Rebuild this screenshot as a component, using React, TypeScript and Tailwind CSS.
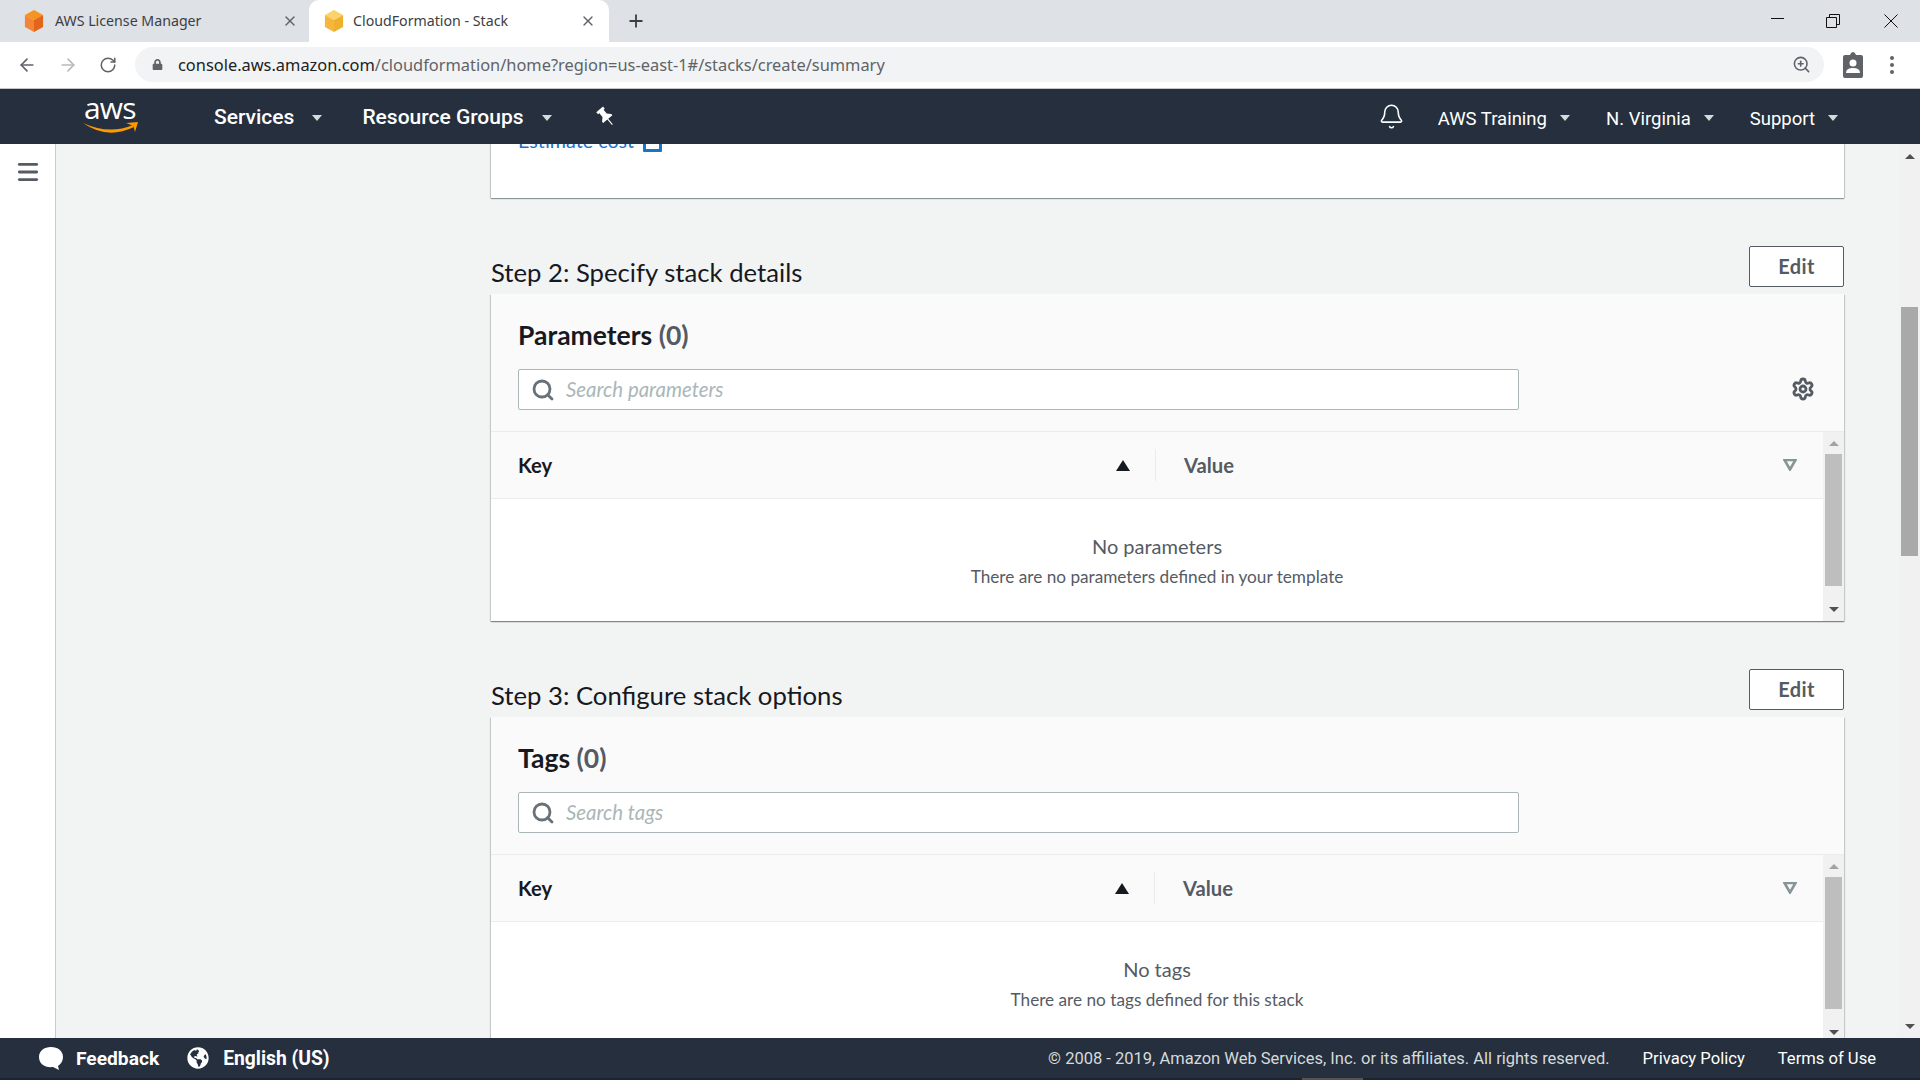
import { ArrowLeft, ArrowRight, Bell, Menu, Plus, RotateCw, Search, Settings, X, ZoomIn } from "lucide-react";
import { FaGlobeAmericas, FaLock } from "react-icons/fa";

const emberFont = "font-['Lato','Noto_Sans',sans-serif]";

function Cube({ light, dark, mid }: { light: string; dark: string; mid: string }) {
  return (
    <svg width="20" height="22" viewBox="0 0 22 24">
      <path d="M11 0 L21 5.5 L11 11 L1 5.5 Z" fill={light} />
      <path d="M1 5.5 L11 11 V24 L1 18.5 Z" fill={mid} />
      <path d="M21 5.5 L11 11 V24 L21 18.5 Z" fill={dark} />
    </svg>
  );
}

function Caret({ color = "border-t-[#d5dbdb]" }: { color?: string }) {
  return <span className={`inline-block h-0 w-0 border-x-[5px] border-t-[6px] border-x-transparent ${color}`} />;
}

function BrowserChrome() {
  return (
    <div className="shrink-0">
      {/* Tabs */}
      <div className="flex h-[42px] items-end bg-[#dee1e6] font-['Noto_Sans',sans-serif] text-[14.2px] text-[#3c4043]">
        <div className="flex h-[42px] w-[309px] items-center pl-[24px]">
          <Cube light="#f7941e" mid="#f58536" dark="#e3651b" />
          <span className="-mt-[1px] ml-[11px] flex-1">AWS License Manager</span>
          <X size={16} strokeWidth={2} className="mr-[11px] text-[#5f6368]" />
        </div>
        <div className="flex h-[42px] w-[300px] items-center rounded-t-[10px] bg-white pl-[15px]">
          <Cube light="#fbd36a" mid="#f4b63d" dark="#edb02f" />
          <span className="-mt-[1px] ml-[9px] flex-1">CloudFormation - Stack</span>
          <X size={16} strokeWidth={2} className="mr-[13px] text-[#5f6368]" />
        </div>
        <div className="flex h-[42px] items-center pl-[17px]">
          <Plus size={20} strokeWidth={2.2} className="text-[#3c4043]" />
        </div>
        <div className="ml-auto flex h-[42px] items-center">
          <svg width="14" height="14" viewBox="0 0 14 14" className="mr-[42px]" fill="none" stroke="#111">
            <path d="M1 4.5 H14" />
          </svg>
          <svg width="14" height="14" viewBox="0 0 14 14" className="mr-[44px]" fill="none" stroke="#111">
            <path d="M0.5 3.5 H10.5 V13.5 H0.5 Z M3.5 3.5 V0.5 H13.5 V10.5 H10.5" />
          </svg>
          <svg width="14" height="14" viewBox="0 0 14 14" className="mr-[22px]" fill="none" stroke="#111">
            <path d="M0.5 0.5 L13.5 13.5 M13.5 0.5 L0.5 13.5" />
          </svg>
        </div>
      </div>
      {/* Address bar */}
      <div className="flex h-[47px] items-center border-b border-[#c4c6c8] bg-white pb-[1px]">
        <ArrowLeft size={20} strokeWidth={2} className="ml-[17px] text-[#5f6368]" />
        <ArrowRight size={20} strokeWidth={2} className="ml-[21px] text-[#b6b9bd]" />
        <RotateCw size={18} strokeWidth={2} className="ml-[21px] text-[#5f6368]" />
        <div className="ml-[18px] flex h-[35px] w-[1689px] items-center rounded-full bg-[#f1f3f4] pl-[17px] font-['Noto_Sans',sans-serif] text-[16.4px]">
          <FaLock size={11} className="text-[#5f6368]" />
          <span className="ml-[15px] mt-[2px] text-[#202124]">console.aws.amazon.com</span>
          <span className="mt-[2px] text-[#5f6368]">/cloudformation/home?region=us-east-1#/stacks/create/summary</span>
          <ZoomIn size={19} strokeWidth={2} className="ml-auto mr-[13px] text-[#5f6368]" />
        </div>
        <svg width="20" height="26" viewBox="0 0 20 26" className="ml-[19px]">
          <path d="M2 3 H7 Q8 0 10 0 Q12 0 13 3 H18 Q20 3 20 5 V24 Q20 26 18 26 H2 Q0 26 0 24 V5 Q0 3 2 3 Z" fill="#5f6368" />
          <circle cx="10" cy="11" r="3.5" fill="#fff" />
          <path d="M3 21 Q3 16 10 16 Q17 16 17 21 Z" fill="#fff" />
        </svg>
        <svg width="4" height="18" viewBox="0 0 4 18" className="ml-[27px]" fill="#5f6368">
          <circle cx="2" cy="2" r="2" />
          <circle cx="2" cy="9" r="2" />
          <circle cx="2" cy="16" r="2" />
        </svg>
      </div>
    </div>
  );
}

function TopNav() {
  return (
    <nav className="flex h-[55px] shrink-0 items-center bg-[#252f3e] font-['Roboto',sans-serif] text-white">
      <div className="relative ml-[83px] h-[36px] w-[56px]">
        <span className="absolute left-[1px] top-[-14px] font-['Open_Sans',sans-serif] text-[30px] tracking-[-0.8px]">aws</span>
        <svg width="56" height="14" viewBox="0 0 56 14" className="absolute left-0 top-[23px]" fill="#f90">
          <path d="M0 1 Q26 13 50 3 L51 5 Q24 18 0 1 Z" />
          <path d="M43 1 L55 0 L52 10 L50.5 4 Z" />
        </svg>
      </div>
      <span className="ml-[75px] mt-[2px] text-[21px] font-medium">Services</span>
      <span className="ml-[18px] mt-[2px] flex"><Caret /></span>
      <span className="ml-[40px] mt-[2px] text-[21px] font-medium">Resource Groups</span>
      <span className="ml-[18px] mt-[2px] flex"><Caret /></span>
      <svg width="20" height="22" viewBox="0 0 18 20" className="ml-[44px]" fill="#fff">
        <g transform="rotate(-40 9 10)">
          <rect x="5" y="1" width="8" height="2.5" />
          <path d="M6.5 3 H11.5 V8 L14.5 11 V12.5 H3.5 V11 L6.5 8 Z" />
          <rect x="8.5" y="12" width="1" height="7" />
        </g>
      </svg>
      <Bell size={27} strokeWidth={1.4} className="ml-auto" />
      <span className="ml-[33px] mt-[6px] text-[18.5px]">AWS Training</span>
      <span className="ml-[13px] mt-[3px] flex"><Caret /></span>
      <span className="ml-[36px] mt-[6px] text-[18.5px]">N. Virginia</span>
      <span className="ml-[13px] mt-[3px] flex"><Caret /></span>
      <span className="ml-[36px] mt-[6px] text-[18.5px]">Support</span>
      <span className="ml-[13px] mr-[82px] mt-[3px] flex"><Caret /></span>
    </nav>
  );
}

function ThinScrollbar() {
  return (
    <div className="flex h-[189px] w-[21px] shrink-0 flex-col items-center bg-[#f1f1f1] pt-[9px]">
      <span className="h-0 w-0 border-x-[5px] border-b-[5px] border-x-transparent border-b-[#a3a3a3]" />
      <div className="mt-[8px] h-[132px] w-[17px] bg-[#bebebe]" />
      <span className="mt-[21px] h-0 w-0 border-x-[5px] border-t-[5px] border-x-transparent border-t-[#505050]" />
    </div>
  );
}

function StepSection({
  step,
  title,
  count,
  placeholder,
  emptyTitle,
  emptyText,
  keyCol,
  showGear,
}: {
  step: string;
  title: string;
  count: string;
  placeholder: string;
  emptyTitle: string;
  emptyText: string;
  keyCol: string;
  showGear?: boolean;
}) {
  return (
    <section className="mt-[48px]">
      <div className="flex h-[41px] items-start justify-between">
        <h2 className="mt-[10px] text-[25.7px] leading-[32px] text-[#16191f]">{step}</h2>
        <button className="flex h-[41px] w-[95px] items-center justify-center rounded-[2px] border border-[#545b64] bg-white pb-[2px] text-[20px] font-bold tracking-[0.4px] text-[#545b64]">
          Edit
        </button>
      </div>
      <div className="mt-[7px] bg-white shadow-[0_1px_1px_0_rgba(0,28,36,0.3),1px_1px_1px_0_rgba(0,28,36,0.15),-1px_1px_1px_0_rgba(0,28,36,0.15)]">
        <div className="h-[138px] border-b border-[#eaeded] bg-[#fafafa] pl-[27px] pt-[27px]">
          <h3 className="text-[26.5px] font-bold leading-[28px] text-[#16191f]">
            {title} <span className="font-bold text-[#545b64]">{count}</span>
          </h3>
          <div className="mt-[20px] flex items-center">
            <div className="flex h-[41px] w-[1001px] items-center rounded-[2px] border border-[#aab7b8] bg-white pl-[12px]">
              <Search size={24} strokeWidth={2.8} className="text-[#687078]" />
              <span className="ml-[11px] text-[20.4px] italic text-[#aab7b8]">{placeholder}</span>
            </div>
            <Settings size={24} strokeWidth={2.8} className={`-mt-[2px] ml-[272px] text-[#545b64] ${showGear ? "" : "hidden"}`} />
          </div>
        </div>
        <div className="flex">
          <div className="flex-1">
            <div className="flex h-[67px] items-center border-b border-[#eaeded] bg-[#fafafa] text-[20.2px] font-bold">
              <div className={`flex h-[32px] items-center justify-between border-r border-[#eaeded] pl-[27px] pr-[25px] ${keyCol}`}>
                <span className="text-[#16191f]">Key</span>
                <span className="h-0 w-0 border-x-[7px] border-b-[11px] border-x-transparent border-b-[#16191f]" />
              </div>
              <div className="flex h-[32px] flex-1 items-center justify-between pl-[28px] pr-[26px]">
                <span className="text-[#545b64]">Value</span>
                <svg width="14" height="12" viewBox="0 0 14 12" fill="none">
                  <path d="M1.5 1 H12.5 L7 10.5 Z" stroke="#879596" strokeWidth="2.6" />
                </svg>
              </div>
            </div>
            <div className="flex h-[122px] flex-col items-center pt-[35px] text-[#545b64]">
              <div className="text-[20px] leading-[24px]">{emptyTitle}</div>
              <div className="mt-[7px] text-[17.2px] leading-[24px]">{emptyText}</div>
            </div>
          </div>
          <ThinScrollbar />
        </div>
      </div>
    </section>
  );
}

function Footer() {
  return (
    <footer className="shrink-0 font-['Roboto',sans-serif]">
      <div className="flex h-[40px] items-center bg-[#252f3e] text-white">
        <svg width="24" height="24" viewBox="0 0 24 24" className="ml-[39px]" fill="#fff">
          <path d="M12 1 C19 1 24 5 24 11 C24 15 22 18 19 20 L20 24 L14 21 C6 22 0 18 0 11 C0 5 5 1 12 1 Z" />
        </svg>
        <span className="ml-[13px] mt-[2px] text-[19.2px] font-bold">Feedback</span>
        <FaGlobeAmericas size={22} className="ml-[28px]" />
        <span className="ml-[14px] mt-[2px] text-[19.3px] font-bold">English (US)</span>
        <span className="ml-auto mt-[2px] text-[16.5px] text-[#d5dbdb]">© 2008 - 2019, Amazon Web Services, Inc. or its affiliates. All rights reserved.</span>
        <span className="ml-[33px] mt-[2px] text-[16.6px]">Privacy Policy</span>
        <span className="ml-[33px] mr-[44px] mt-[2px] text-[16.6px]">Terms of Use</span>
      </div>
      <div className="h-[2px] bg-[#1c2430] pl-[1302px]">
        <div className="h-[2px] w-[61px] bg-[#545454]" />
      </div>
    </footer>
  );
}

export default function App() {
  return (
    <div className="flex h-screen w-full flex-col overflow-hidden bg-[#f2f3f3]">
      <BrowserChrome />
      <TopNav />
      <div className="flex min-h-0 flex-1">
        <aside className="w-[56px] shrink-0 border-r border-[#c8cccc] bg-white pl-[15px] pt-[15px]">
          <Menu size={26} strokeWidth={2.6} className="text-[#545b64]" />
        </aside>
        <main className={`min-w-0 flex-1 overflow-hidden pl-[435px] pr-[55px] ${emberFont}`}>
          {/* scrolled past: bottom of the previous step */}
          <div className="h-[54px] overflow-hidden bg-white pl-[27px] shadow-[0_1px_1px_0_rgba(0,28,36,0.4),1px_0_1px_0_rgba(0,28,36,0.15),-1px_0_1px_0_rgba(0,28,36,0.15)]">
            <div className="-mt-[15px] flex items-center text-[19.7px] leading-[24px] text-[#1a73c8]">
              Estimate cost
              <span className="ml-[9px] mt-[4px] flex h-[18px] w-[19px] justify-center rounded-[1px] border-[3px] border-[#1a73c8]">
                <span className="h-[5px] w-[3px] bg-[#1a73c8]" />
              </span>
            </div>
          </div>
          <StepSection
            step="Step 2: Specify stack details"
            title="Parameters"
            count="(0)"
            placeholder="Search parameters"
            emptyTitle="No parameters"
            emptyText="There are no parameters defined in your template"
            keyCol="w-[665px]"
            showGear
          />
          <StepSection
            step="Step 3: Configure stack options"
            title="Tags"
            count="(0)"
            placeholder="Search tags"
            emptyTitle="No tags"
            emptyText="There are no tags defined for this stack"
            keyCol="w-[664px]"
          />
        </main>
        <div className="flex w-[21px] shrink-0 flex-col items-center bg-[#f1f1f1] pb-[9px] pt-[10px]">
          <span className="h-0 w-0 border-x-[5px] border-b-[5px] border-x-transparent border-b-[#505050]" />
          <div className="mt-[148px] h-[249px] w-[17px] bg-[#a9a9a9]" />
          <span className="mt-auto h-0 w-0 border-x-[5px] border-t-[5px] border-x-transparent border-t-[#505050]" />
        </div>
      </div>
      <Footer />
    </div>
  );
}
